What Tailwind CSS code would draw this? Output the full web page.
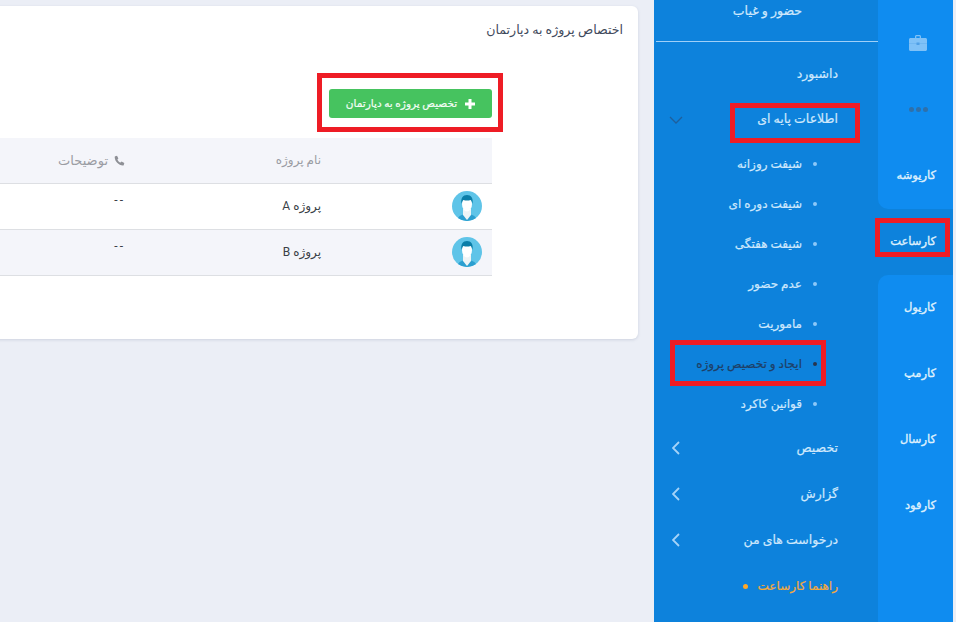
<!DOCTYPE html>
<html lang="fa" dir="rtl">
<head>
<meta charset="utf-8">
<title>Karsaat</title>
<script src="https://cdn.jsdelivr.net/npm/@tailwindcss/browser@4"></script>
</head>
<body class="m-0 overflow-hidden bg-[#ebeef6] font-['Roboto','DejaVu_Sans',sans-serif]">
<div class="relative flex h-[622px] w-[956px] overflow-hidden pr-[3px]">

  <!-- Icon rail -->
  <aside class="flex w-[75px] shrink-0 flex-col bg-[#0d82dc] text-[11.500px] text-[#dff0fd] [-webkit-text-stroke:0.35px]">
    <div class="rounded-bl-[10px] bg-[#0f8cf0] pt-[10px]">
      <div class="flex h-[66px] items-center justify-center pl-[5px]">
        <svg class="w-[18px] h-[16px]" viewBox="0 0 18 16"><path d="M6 3V1.500C6 .7 6.700 0 7.500 0h3C11.300 0 12 .7 12 1.500V3h4.500c.8 0 1.500.7 1.500 1.500v10c0 .8-.7 1.500-1.500 1.500h-15C.7 16 0 15.300 0 14.500v-10C0 3.700.7 3 1.500 3H6zm1.300 0h3.400V1.300H7.300V3z" fill="#7fc1f7"/><path d="M0 8.500h18" stroke="#66b0ee" stroke-width=".6"/><rect x="7.500" y="7.500" width="3" height="2.500" fill="#4f9fe6"/></svg>
      </div>
      <div class="flex h-[66px] items-center justify-center gap-[2px] pl-[5px]">
        <span class="h-[5px] w-[5px] rounded-full bg-[#2f70aa]"></span>
        <span class="h-[5px] w-[5px] rounded-full bg-[#2f70aa]"></span>
        <span class="h-[5px] w-[5px] rounded-full bg-[#2f70aa]"></span>
      </div>
      <div class="flex h-[67px] items-center pr-[17px]">کارپوشه</div>
    </div>
    <div class="flex h-[66px] items-center pr-[17px]">کارساعت</div>
    <div class="flex-1 rounded-tl-[10px] bg-[#0f8cf0]">
      <div class="flex h-[66px] items-center pr-[17px]">کارپول</div>
      <div class="flex h-[66px] items-center pr-[17px]">کارمپ</div>
      <div class="flex h-[66px] items-center pr-[17px]">کارسال</div>
      <div class="flex h-[66px] items-center pr-[17px]">کارفود</div>
    </div>
  </aside>

  <!-- Menu -->
  <nav class="w-[224px] shrink-0 bg-[#0d82dc] text-[12px] text-[#cfe8fc] [-webkit-text-stroke:0.2px]">
    <div class="ml-[2px] h-[42px] border-b border-[#9fd0f8] pt-[1px] pr-[76px] text-[12.500px] leading-[20px]">حضور و غیاب</div>
    <ul class="pt-[10px] text-[12.500px]">
      <li class="flex h-[45px] items-center justify-between pr-[40px] pl-[15px]">داشبورد</li>
      <li class="flex h-[45px] items-center justify-between pr-[40px] pl-[15px]">
        <span>اطلاعات پایه ای</span>
        <svg class="w-[14px] h-[8px]" viewBox="0 0 14 8" fill="none" stroke="#1f5f9c" stroke-width="1.300"><path d="M1 1l6 6 6-6"/></svg>
      </li>
      <li class="mt-[2px] flex h-[40px] items-center gap-[11px] pr-[61px] text-[12px]"><span class="h-[4px] w-[4px] rounded-full bg-[#8cc8f8]"></span>شیفت روزانه</li>
      <li class="flex h-[40px] items-center gap-[11px] pr-[61px] text-[12px]"><span class="h-[4px] w-[4px] rounded-full bg-[#8cc8f8]"></span>شیفت دوره ای</li>
      <li class="flex h-[40px] items-center gap-[11px] pr-[61px] text-[12px]"><span class="h-[4px] w-[4px] rounded-full bg-[#8cc8f8]"></span>شیفت هفتگی</li>
      <li class="flex h-[40px] items-center gap-[11px] pr-[61px] text-[12px]"><span class="h-[4px] w-[4px] rounded-full bg-[#8cc8f8]"></span>عدم حضور</li>
      <li class="flex h-[40px] items-center gap-[11px] pr-[61px] text-[12px]"><span class="h-[4px] w-[4px] rounded-full bg-[#8cc8f8]"></span>ماموریت</li>
      <li class="flex h-[40px] items-center gap-[11px] pr-[61px] text-[12px] text-[#1f3f66]"><span class="h-[4px] w-[4px] rounded-full bg-[#27364f]"></span>ایجاد و تخصیص پروژه</li>
      <li class="flex h-[40px] items-center gap-[11px] pr-[61px] text-[12px]"><span class="h-[4px] w-[4px] rounded-full bg-[#8cc8f8]"></span>قوانین کاکرد</li>
      <li class="mt-[1px] flex h-[46px] items-center justify-between pr-[40px] pl-[18px]">
        <span>تخصیص</span>
        <svg class="w-[8px] h-[14px]" viewBox="0 0 8 14" fill="none" stroke="#a5d3f8" stroke-width="1.800"><path d="M7 1L1 7l6 6"/></svg>
      </li>
      <li class="flex h-[46px] items-center justify-between pr-[40px] pl-[18px]">
        <span>گزارش</span>
        <svg class="w-[8px] h-[14px]" viewBox="0 0 8 14" fill="none" stroke="#a5d3f8" stroke-width="1.800"><path d="M7 1L1 7l6 6"/></svg>
      </li>
      <li class="flex h-[46px] items-center justify-between pr-[40px] pl-[18px]">
        <span>درخواست های من</span>
        <svg class="w-[8px] h-[14px]" viewBox="0 0 8 14" fill="none" stroke="#a5d3f8" stroke-width="1.800"><path d="M7 1L1 7l6 6"/></svg>
      </li>
      <li class="flex h-[46px] items-center gap-[10px] pr-[40px] text-[12px] text-[#f5a93a]">
        راهنما کارساعت
        <span class="h-[5px] w-[5px] rounded-full bg-[#ffa726]"></span>
      </li>
    </ul>
  </nav>

  <!-- Content -->
  <main class="min-w-0 flex-1 pt-[6px]">
    <section class="-ml-[20px] mr-[16px] h-[333px] rounded-md bg-white pt-[15px] pr-[15px] shadow-[0_1px_3px_rgba(120,130,160,0.25)]">
      <h1 class="text-[12.600px] leading-[18px] font-normal text-[#3f4a5c]">اختصاص پروژه به دپارتمان</h1>
      <div class="mt-[50px] mr-[131px]">
        <button class="flex h-[29px] w-[163px] items-center justify-center gap-[8px] rounded-[3px] bg-[#46c35f] text-[10.500px] text-[#f2fdf5] [-webkit-text-stroke:0.2px]">
          <svg class="w-[10px] h-[10px]" viewBox="0 0 10 10" fill="#fff"><path d="M3.500 0h3v3.500H10v3H6.500V10h-3V6.500H0v-3h3.500z"/></svg>
          تخصیص پروژه به دپارتمان
        </button>
      </div>
      <table class="mt-[20px] mr-[131px] w-[600px] border-collapse text-[12px]">
        <thead>
          <tr class="h-[45px] border-b border-[#dddfe3] bg-[#f4f5fa] text-[#9a9ca3]">
            <th class="w-[171px] font-normal"></th>
            <th class="w-[196px] text-right font-normal">نام پروژه</th>
            <th class="text-right font-normal">
              <span class="flex items-center gap-[6px] text-[13px]">
                <svg class="w-[11px] h-[11px]" viewBox="0 0 24 24" fill="#8e9096"><path d="M6.600 1.500l3 6-2.200 2.200c1.200 3 3.900 5.700 6.900 6.900l2.200-2.200 6 3-1.200 4.300c-.3 .8-1 1.300-1.800 1.300C10 22.500 1.500 14 1.500 4.500c0-.8 .5-1.500 1.300-1.800z"/></svg>
                توضیحات
              </span>
            </th>
          </tr>
        </thead>
        <tbody class="text-[#3a3f47]">
          <tr class="h-[46px] border-b border-[#dddfe3]">
            <td class="pr-[10px]">
              <svg class="w-[30px] h-[30px]" viewBox="0 0 30 30"><circle cx="15" cy="15" r="15" fill="#5fc4e8"/><path d="M6 27c2-3 5-4 9-4s7 1 9 4a15 15 0 0 1-18 0z" fill="#2b9fd0"/><path d="M11 18h8v6l-4 5-4-5z" fill="#eef4f6"/><ellipse cx="15" cy="13" rx="5" ry="7.500" fill="#fff"/><path d="M9.500 13C8.500 7 11 4 15 4s6.500 3 5.500 9c-.5-2-1-3.500-2-4-2 .8-5 .8-7 0-1 .5-1.500 2-2 4z" fill="#0b7ea8"/></svg>
            </td>
            <td>پروژه A</td>
            <td class="pb-[12px] tracking-[2px]">--</td>
          </tr>
          <tr class="h-[46px] border-b border-[#dddfe3] bg-[#f4f5fa]">
            <td class="pr-[10px]">
              <svg class="w-[30px] h-[30px]" viewBox="0 0 30 30"><circle cx="15" cy="15" r="15" fill="#5fc4e8"/><path d="M6 27c2-3 5-4 9-4s7 1 9 4a15 15 0 0 1-18 0z" fill="#2b9fd0"/><path d="M11 18h8v6l-4 5-4-5z" fill="#eef4f6"/><ellipse cx="15" cy="13" rx="5" ry="7.500" fill="#fff"/><path d="M9.500 13C8.500 7 11 4 15 4s6.500 3 5.500 9c-.5-2-1-3.500-2-4-2 .8-5 .8-7 0-1 .5-1.500 2-2 4z" fill="#0b7ea8"/></svg>
            </td>
            <td>پروژه B</td>
            <td class="pb-[12px] tracking-[2px]">--</td>
          </tr>
        </tbody>
      </table>
    </section>
  </main>

  <!-- Red annotation boxes over the screenshot -->
  <div class="pointer-events-none absolute left-[317px] top-[73px] h-[59px] w-[186px] border-[5px] border-[#ee1c25]"></div>
  <div class="pointer-events-none absolute left-[730px] top-[103px] h-[40px] w-[130px] border-[5px] border-[#ee1c25]"></div>
  <div class="pointer-events-none absolute left-[875px] top-[218px] h-[39px] w-[75px] border-[5px] border-[#ee1c25]"></div>
  <div class="pointer-events-none absolute left-[670px] top-[340px] h-[46px] w-[156px] border-[5px] border-[#ee1c25]"></div>
</div>
</body>
</html>
